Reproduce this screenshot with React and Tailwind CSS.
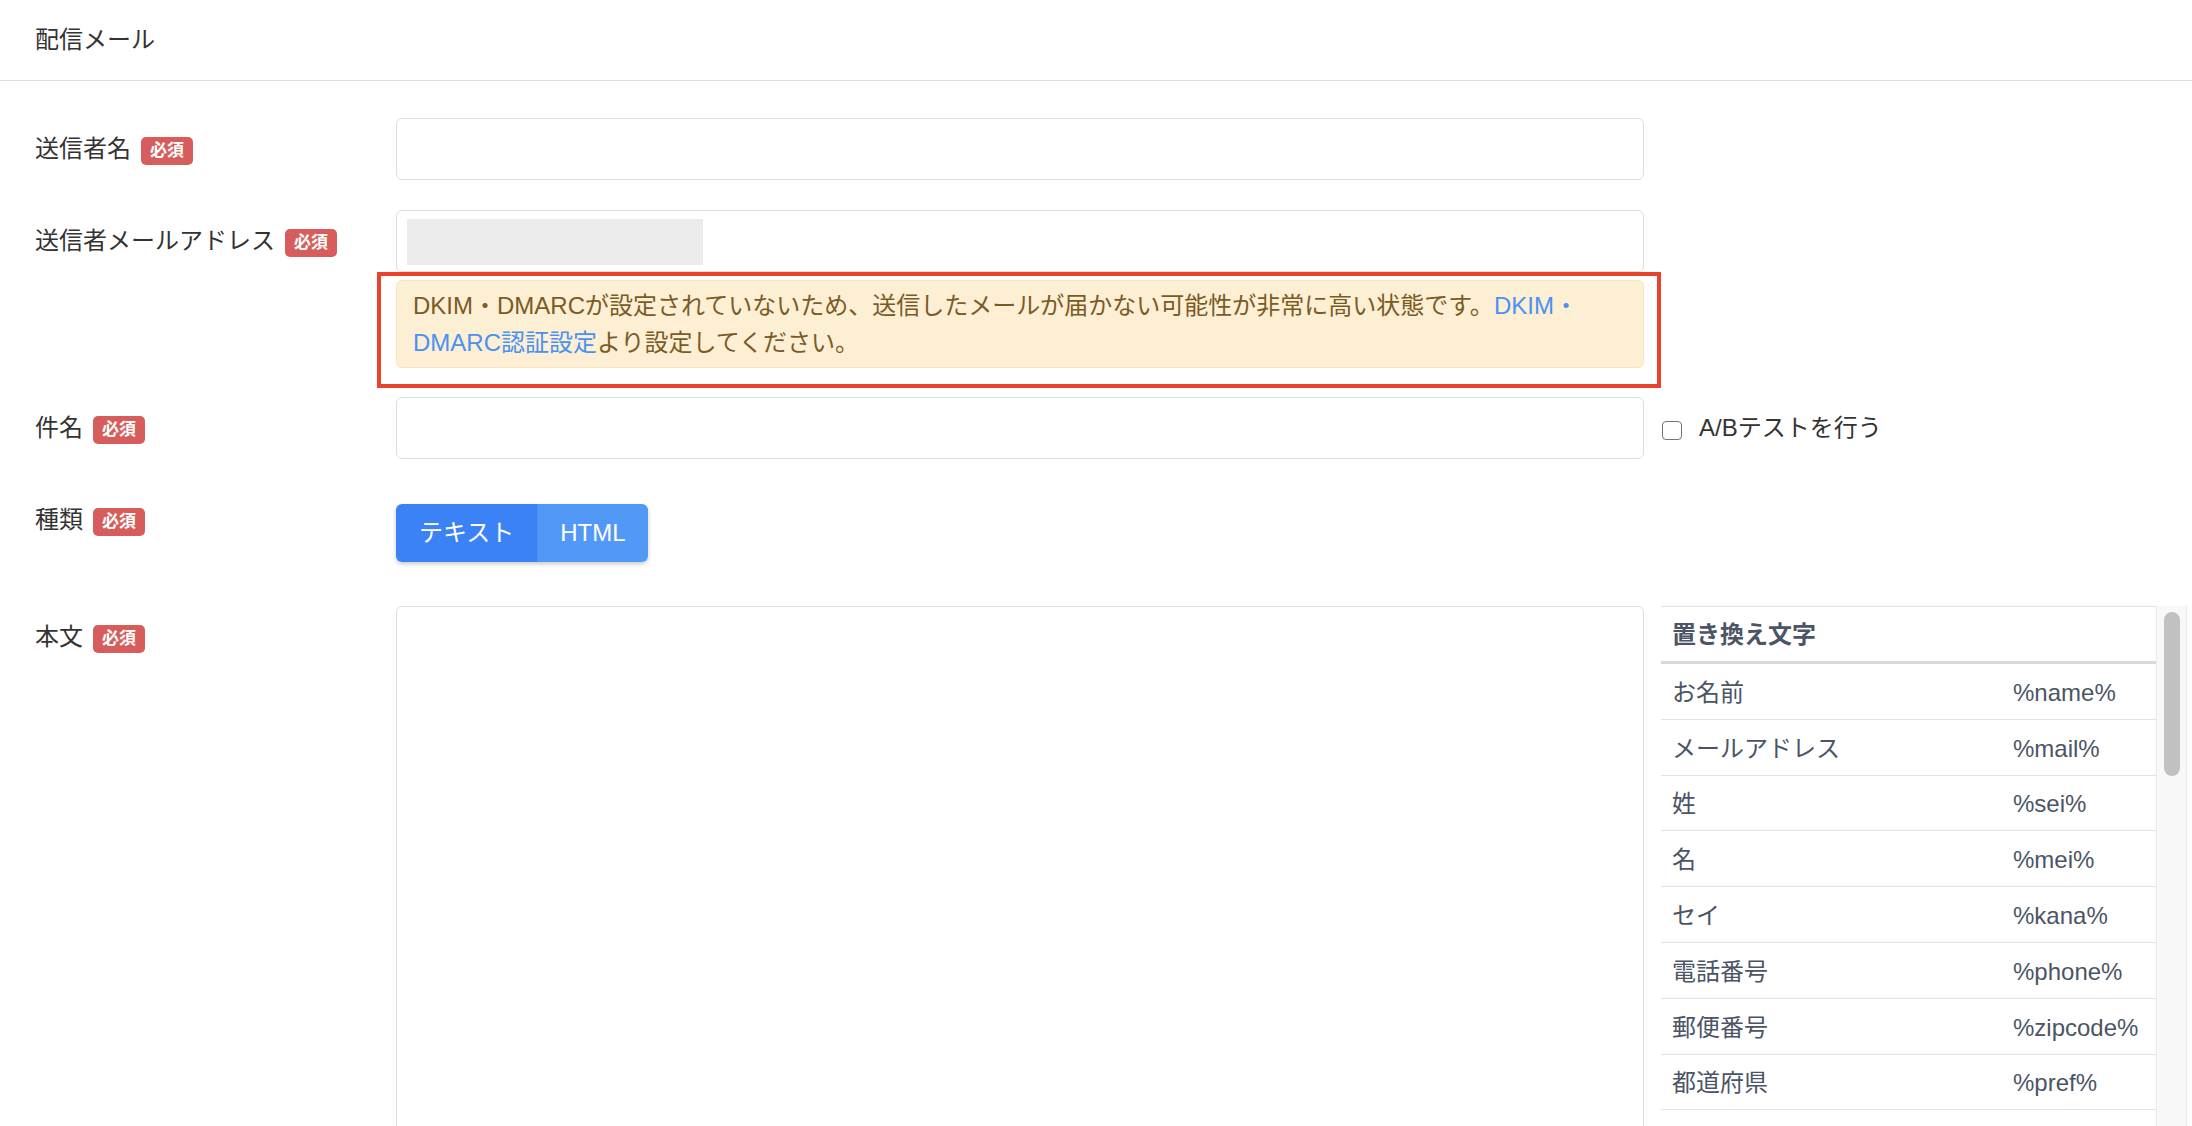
import React from "react";

const FONT = "font-['Liberation_Sans','Noto_Sans_CJK_JP',sans-serif]";

function Badge() {
  return (
    <span className="mt-[3px] inline-flex h-[28px] items-center rounded-[5px] bg-[#d65d5b] px-[9px] text-[17px] font-bold leading-none text-white">
      必須
    </span>
  );
}

function Label({ children }) {
  return (
    <div className="flex w-[396px] shrink-0 items-center gap-[10px] self-start pl-[35px] pt-[13px]">
      <span className="leading-[36px]">{children}</span>
      <Badge />
    </div>
  );
}

const inputCls =
  "h-[62px] w-full rounded-[6px] border border-[#dcdde3] bg-white";

const vars = [
  ["お名前", "%name%"],
  ["メールアドレス", "%mail%"],
  ["姓", "%sei%"],
  ["名", "%mei%"],
  ["セイ", "%kana%"],
  ["電話番号", "%phone%"],
  ["郵便番号", "%zipcode%"],
  ["都道府県", "%pref%"],
];

export default function App() {
  return (
    <div
      className={`${FONT} h-screen w-full overflow-hidden bg-white text-[24px] text-[#333333]`}
    >
      <div className="flex h-[81px] items-center border-b border-[#dfdfe3] px-[35px] leading-[36px]">
        配信メール
      </div>

      <div className="pt-[37px]">
        {/* 送信者名 */}
        <div className="mb-[30px] flex">
          <Label>送信者名</Label>
          <div className="w-[1248px] shrink-0">
            <div className={inputCls} />
          </div>
        </div>

        {/* 送信者メールアドレス */}
        <div className="mb-[29px] flex">
          <Label>送信者メールアドレス</Label>
          <div className="w-[1248px] shrink-0">
            <div className={`${inputCls} pl-[10px] pt-[8px]`}>
              <div className="h-[46px] w-[296px] bg-[#ebebeb]" />
            </div>
            <div className="relative mt-[8px]">
              <div className="rounded-[6px] border border-[#f7e4bd] bg-[#fcefd4] px-[16px] py-[6px] leading-[37px] text-[#7b5b25]">
                DKIM・DMARCが設定されていないため、送信したメールが届かない可能性が非常に高い状態です。
                <span className="text-[#4a91f3]">DKIM・</span>
                <br />
                <span className="text-[#4a91f3]">DMARC認証設定</span>より設定してください。
              </div>
              <div className="pointer-events-none absolute -bottom-[20px] -left-[19px] -right-[17px] -top-[8px] border-[4px] border-[#e8432b]" />
            </div>
          </div>
        </div>

        {/* 件名 */}
        <div className="mb-[30px] flex">
          <Label>件名</Label>
          <div className="w-[1248px] shrink-0">
            <div className={inputCls} />
          </div>
          <div className="ml-[18px] flex h-[62px] items-center">
            <span className="mt-[4px] h-[19px] w-[20px] rounded-[4px] border-[1.5px] border-[#737373] bg-white" />
            <span className="ml-[17px] leading-[36px]">A/Bテストを行う</span>
          </div>
        </div>

        {/* 種類 */}
        <div className="mb-[44px] flex">
          <Label>種類</Label>
          <div className="w-[1248px] shrink-0 pt-[15px]">
            <div className="inline-flex overflow-hidden rounded-[6px] shadow-[0_2px_4px_rgba(0,0,0,0.22)]">
              <button className="bg-[#3b82f6] px-[23px] py-[11px] leading-[36px] text-white">
                テキスト
              </button>
              <button className="border-l border-[#4a8ef2] bg-[#5298f7] px-[22px] py-[11px] leading-[36px] text-white">
                HTML
              </button>
            </div>
          </div>
        </div>

        {/* 本文 */}
        <div className="flex">
          <Label>本文</Label>
          <div className="w-[1248px] shrink-0">
            <textarea className="block h-[700px] w-full resize-none rounded-[6px] border border-[#dcdde3] bg-white outline-none" />
          </div>
          <div className="ml-[17px] flex">
            <div className="w-[495px] text-[#4b5565]">
              <div className="flex h-[58px] items-center border-b-[3px] border-t border-b-[#d8d9df] border-t-[#e3e3e6] px-[11px] pt-[2px] font-bold leading-[36px]">
                置き換え文字
              </div>
              {vars.map(([k, v]) => (
                <div
                  key={v}
                  className="grid h-[55.8px] grid-cols-[341px_1fr] items-center border-b border-[#e3e3e6] pt-[3px] leading-[36px]"
                >
                  <span className="px-[11px]">{k}</span>
                  <span className="px-[11px]">{v}</span>
                </div>
              ))}
            </div>
            <div className="h-[700px] w-[31px] border-x border-[#ececec] bg-[#f8f8f8] pt-[6px]">
              <div className="mx-auto h-[164px] w-[16px] rounded-full bg-[#c1c1c1]" />
            </div>
          </div>
        </div>
      </div>
    </div>
  );
}
